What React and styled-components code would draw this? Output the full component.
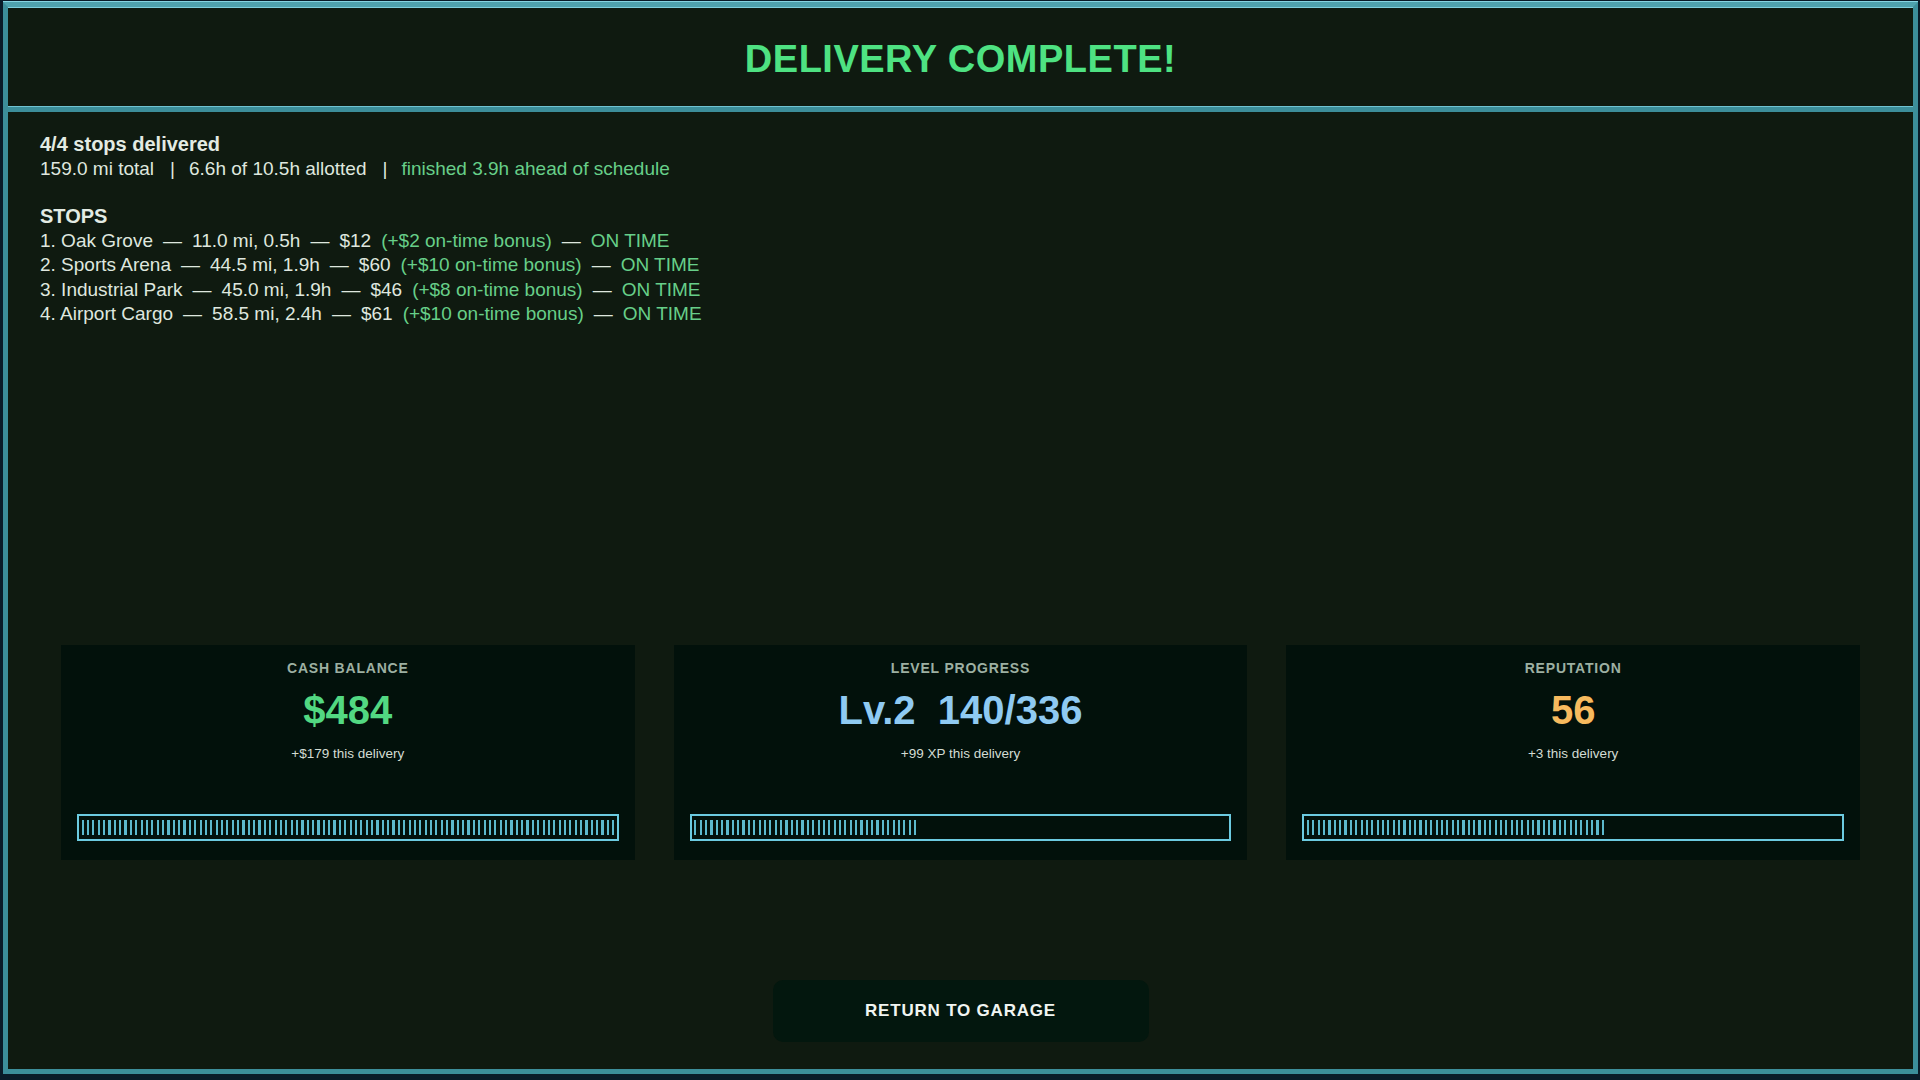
import React from "react";
import styled, { createGlobalStyle } from "styled-components";

// Data
const stops = [
  { name: "Oak Grove", miles: "11.0", hours: "0.5", pay: 12, bonus: 2 },
  { name: "Sports Arena", miles: "44.5", hours: "1.9", pay: 60, bonus: 10 },
  { name: "Industrial Park", miles: "45.0", hours: "1.9", pay: 46, bonus: 8 },
  { name: "Airport Cargo", miles: "58.5", hours: "2.4", pay: 61, bonus: 10 },
];

const stats = [
  {
    label: "CASH BALANCE",
    value: "$484",
    color: "#52d882",
    note: "+$179 this delivery",
    fill: 100,
  },
  {
    label: "LEVEL PROGRESS",
    value: "Lv.2\u00a0\u00a0140/336",
    color: "#8fcaf2",
    note: "+99 XP this delivery",
    fill: Math.round((140 / 336) * 100),
  },
  {
    label: "REPUTATION",
    value: "56",
    color: "#f7ba5e",
    note: "+3 this delivery",
    fill: 56,
  },
];

const SEGMENTS = 100;

const DeliveryComplete = () => {
  return (
    <>
      <GlobalStyle />
      <Frame>
        <Header>
          <Title>DELIVERY COMPLETE!</Title>
        </Header>
        <Content>
          <Summary>
            <Heading>4/4 stops delivered</Heading>
            <Line>
              159.0 mi total<Sep>|</Sep>6.6h of 10.5h allotted<Sep>|</Sep>
              <Good>finished 3.9h ahead of schedule</Good>
            </Line>
            <Heading $spaced>STOPS</Heading>
            {stops.map((s, i) => (
              <Line key={s.name}>
                {`${i + 1}. ${s.name}`}
                <Dash>—</Dash>
                {`${s.miles} mi, ${s.hours}h`}
                <Dash>—</Dash>
                {`$${s.pay}`}
                <Good $left>{`(+$${s.bonus} on-time bonus)`}</Good>
                <Dash>—</Dash>
                <Good>ON TIME</Good>
              </Line>
            ))}
          </Summary>

          <Stats>
            {stats.map((st) => (
              <Card key={st.label}>
                <CardLabel>{st.label}</CardLabel>
                <CardValue $color={st.color}>{st.value}</CardValue>
                <CardNote>{st.note}</CardNote>
                <Bar>
                  {Array.from({ length: SEGMENTS }).map((_, i) => (
                    <Segment key={i} $on={i < st.fill} />
                  ))}
                </Bar>
              </Card>
            ))}
          </Stats>

          <ReturnButton>RETURN TO GARAGE</ReturnButton>
        </Content>
      </Frame>
    </>
  );
};

const GlobalStyle = createGlobalStyle`
  html, body {
    margin: 0;
    padding: 0;
    background: #0a1b28;
    font-family: "Liberation Sans", Arial, sans-serif;
  }
  * {
    box-sizing: border-box;
  }
`;

const Frame = styled.div`
  margin: 2px 2px 0 3px;
  height: calc(100vh - 8px);
  border: 5px solid #3c8e9a;
  border-top-color: #4fa2ae;
  box-shadow: inset 0 1px 0 #7fcfdd, 0 -1px 0 #86d4e2;
  background: #0f1a10;
  display: flex;
  flex-direction: column;
`;

const Header = styled.div`
  height: 105px;
  padding-top: 5px;
  flex-shrink: 0;
  display: flex;
  align-items: center;
  justify-content: center;
  border-bottom: 5px solid #3c8e9a;
  box-shadow: 0 -1px 0 #6fc3d2 inset;
`;

const Title = styled.h1`
  margin: 0;
  font-size: 38px;
  font-weight: 700;
  letter-spacing: 0.5px;
  color: #4ee282;
`;

const Content = styled.div`
  flex: 1;
  display: flex;
  flex-direction: column;
  padding: 20px 32px 27px;
  color: #dfe7df;
`;

const Summary = styled.div`
  display: flex;
  flex-direction: column;
`;

const Heading = styled.div`
  font-size: 20px;
  font-weight: 700;
  line-height: 25px;
  color: #e3ebe3;
  margin-top: ${(p) => (p.$spaced ? "22px" : "0")};
`;

const Line = styled.div`
  font-size: 19px;
  line-height: 24.5px;
  white-space: nowrap;
`;

const Sep = styled.span`
  margin: 0 14px 0 16px;
`;

const Dash = styled.span`
  margin: 0 10px;
`;

const Good = styled.span`
  color: #67cf89;
  margin-left: ${(p) => (p.$left ? "10px" : "0")};
`;

const Stats = styled.div`
  margin: auto 21px 120px;
  display: grid;
  grid-template-columns: repeat(3, 1fr);
  gap: 39px;
`;

const Card = styled.div`
  height: 215px;
  background: #02110b;
  padding: 14px 16px 19px;
  display: flex;
  flex-direction: column;
  align-items: center;
`;

const CardLabel = styled.div`
  font-size: 14px;
  line-height: 18px;
  font-weight: 700;
  letter-spacing: 0.8px;
  color: #9db0a2;
`;

const CardValue = styled.div`
  margin-top: 11px;
  font-size: 40px;
  line-height: 44px;
  font-weight: 700;
  color: ${(p) => p.$color};
`;

const CardNote = styled.div`
  margin-top: 14px;
  font-size: 13.5px;
  line-height: 16px;
  color: #d3dcd3;
`;

const Bar = styled.div`
  margin-top: auto;
  width: 100%;
  height: 27px;
  border: 2px solid #6ccbe0;
  padding: 4px 1px;
  display: flex;
`;

const Segment = styled.span`
  flex: 1;
  margin: 0 1.6px;
  background: ${(p) => (p.$on ? "#5cb9cc" : "transparent")};
`;

const ReturnButton = styled.button`
  align-self: center;
  width: 376px;
  height: 62px;
  flex-shrink: 0;
  border: none;
  border-radius: 10px;
  background: #03170e;
  color: #f1f5f1;
  font-family: "Liberation Sans", Arial, sans-serif;
  font-size: 17px;
  font-weight: 700;
  letter-spacing: 0.8px;
  cursor: pointer;
`;

export default DeliveryComplete;
